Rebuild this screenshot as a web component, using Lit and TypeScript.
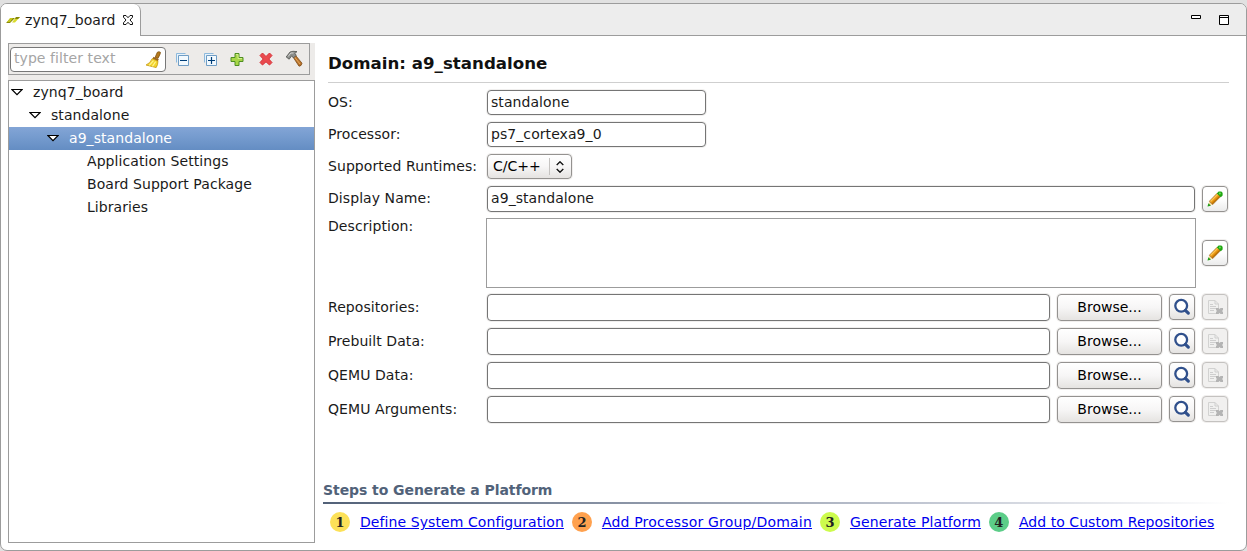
import { LitElement, html, css, svg } from "lit";
import { customElement, property } from "lit/decorators.js";

const glyphs: Record<string, [string, unknown]> = {
  xilinx: ["0 0 16 16", svg`<path d="M1 11L6 6H10L5 11Z" fill="#8a8a08"/><path d="M2 10H5L8 6H5Z" fill="#c4c61c"/><path d="M7 10.5L11 5H15L10 10.5Z" fill="#d9db2c"/><path d="M11 5H15L13 7H10Z" fill="#85850a"/>`],
  close: ["0 0 12 12", svg`<path d="M1.5 1.5H4L6 3.7L8 1.5H10.5V3.2L8 6L10.5 8.8V10.5H8L6 8.3L4 10.5H1.5V8.8L4 6L1.5 3.2Z" fill="#fff" stroke="#111"/>`],
  broom: ["0 0 16 16", svg`<path d="M9.5 6L11.6 1.2Q13.2 0 14.6 1.3Q14.6 2.5 12.2 7Z" fill="#b57a1c" stroke="#7c4d0c" stroke-width=".7"/><path d="M8 5.5L13 7.7L12 9.6L7 7.5Z" fill="#9c641c"/><path d="M6.8 7.2L12.2 9.6Q12.2 13 10.5 15.6L1 13.2Q5 11.5 6.8 7.2Z" fill="#f2d42c" stroke="#c79b10" stroke-width=".8"/><path d="M4 13.5L8 9M7 14.5L10 10" stroke="#fff494" stroke-width="1"/>`],
  collapse: ["0 0 16 16", svg`<path d="M2.5 11.5V2.5H11.5" fill="#e8f3fb" stroke="#8db9dc"/><path d="M4.5 4.5H14.5V14.5H4.5Z" fill="#f2f9fe" stroke="#6f9dc5"/><path d="M6 9H13V10H6Z" fill="#003e78"/>`],
  expand: ["0 0 16 16", svg`<path d="M2.5 11.5V2.5H11.5" fill="#e8f3fb" stroke="#8db9dc"/><path d="M4.5 4.5H14.5V14.5H4.5Z" fill="#f2f9fe" stroke="#6f9dc5"/><path d="M6 9.5H13M9.5 6V13" stroke="#003e78" stroke-width="1.2"/>`],
  plus: ["0 0 16 16", svg`<path d="M6 2.5H10V6.5H14V10.5H10V14.5H6V10.5H2V6.5H6Z" fill="#a8d648" stroke="#4f8e22"/><path d="M7 3.5H9V7.5H13" fill="none" stroke="#d2ee8e"/>`],
  cross: ["0 0 16 16", svg`<path d="M4.5 2L8 5.5L11.5 2L14 4.5L10.8 8L14 11.5L11.5 14L8 10.8L4.5 14L2 11.5L5.2 8L2 4.5Z" fill="#ea4a4e" stroke="#d63238"/>`],
  hammer: ["0 0 18 18", svg`<path d="M8 7L10.2 5L17 13.2Q16.5 16.2 14 16.2Z" fill="#b9742c" stroke="#7c4a18" stroke-width=".8"/><path d="M9.5 7L15 14" stroke="#e3a75e"/><path d="M1.2 7L5 2Q7.5.8 12 1.6L9.8 3.5L11.3 5.2L8.6 8L6.7 5.8L4.2 9.2Z" fill="#8d8f8c" stroke="#50524e" stroke-width=".8"/><path d="M3.2 6.5L5.8 3H8.5" fill="none" stroke="#d5d6d4"/>`],
  arrow: ["0 0 12 8", svg`<path d="M.9 1.5H11.1L6 6.6Z" fill="#fff" stroke="#000" stroke-width="1.2"/>`],
  updown: ["0 0 8 12", svg`<path d="M.7 4L4 .8L7.3 4M.7 8L4 11.2L7.3 8" fill="none" stroke="#111" stroke-width="1.4"/>`],
  pencil: ["0 0 16 16", svg`<path d="M1 15L2.4 10.2L5.5 13.5Z" fill="#f7d79b"/><path d="M2.4 10.2L10.2 2.2L13.6 5.6L5.7 13.6Z" fill="#e9960f" stroke="#87530b" stroke-width=".6"/><path d="M3.5 10.5L11 3" stroke="#fbc557" stroke-width="1.2"/><path d="M5 12.7L12.8 5" stroke="#a96206"/><path d="M9.8 2.4L11.6 .6H14.3L15.6 1.8V4.4L13.8 6.2Z" fill="#20a713"/><circle cx="12.9" cy="2.5" r="1" fill="#6fdd58"/><path d="M.5 15.5L1.4 12.2L4 14.8Z" fill="#1f9d17"/>`],
  search: ["0 0 18 18", svg`<circle cx="8.2" cy="7.8" r="5.9" fill="#fff" stroke="#30508c" stroke-width="2.3"/><path d="M12.4 12.4L15.3 15.1" stroke="#30508c" stroke-width="3.2" stroke-linecap="round"/>`],
  remove: ["0 0 16 16", svg`<path d="M1.5 1.5H8L11.5 5V14.5H1.5Z" fill="#f0f0ef" stroke="#d2d2d1"/><path d="M8 1.5V5H11.5M3 5.5H6M3 7.5H9M3 9.5H9M3 11.5H7" fill="none" stroke="#cecece"/><path d="M9 9H11.5L12.5 10L13.5 9H16V11L15 12L16 13V15H13.5L12.5 14L11.5 15H9V13L10 12L9 11Z" fill="#b4b4b4"/>`],
  minimize: ["0 0 10 10", svg`<path d="M.5.5H9.5V3.5H.5Z" fill="#fff" stroke="#000"/>`],
  maximize: ["0 0 10 10", svg`<path d="M.5.5H9.5V9.5H.5ZM.5 2.5H9.5" fill="#fff" stroke="#000"/>`],
};

@customElement("ui-icon")
class UiIcon extends LitElement {
  @property() name = "";
  static styles = css`
    :host { display: block; flex: none; width: 16px; height: 16px; }
    svg { display: block; width: 100%; height: 100%; }
  `;
  render() {
    const [box, body] = glyphs[this.name] ?? ["0 0 1 1", ""];
    return html`<svg viewBox=${box}>${body}</svg>`;
  }
}

@customElement("app-root")
class AppRoot extends LitElement {
  static styles = css`
    :host { display: block; height: 551px; box-sizing: border-box; padding-top: 3px; background: #e1e1e1;
      font: 14px/16px "DejaVu Sans", sans-serif; letter-spacing: .07px; color: #1a1a1a; overflow: hidden; white-space: nowrap; }
    * { box-sizing: border-box; }
    .frame { height: 548px; border: 1px solid #9c9c9c; border-radius: 7px; background: #fff; overflow: hidden;
      display: flex; flex-direction: column; }
    .tabs { height: 32px; flex: none; display: flex; background: #ededed; border-bottom: 1px solid #9c9c9c; }
    .tab { width: 140px; height: 32px; background: #fff; border-right: 1px solid #9c9c9c; border-top-right-radius: 7px;
      display: flex; align-items: center; padding-left: 4px; }
    .tab span { margin-left: 4px; width: 97px; }
    .tab .x { width: 12px; height: 12px; }
    .window { margin-left: auto; display: flex; gap: 18px; padding: 11px 17px 0 0; }
    .window ui-icon { width: 10px; height: 10px; }
    .body { flex: 1; min-height: 0; display: flex; padding: 7px 17px 7px 7px; }
    .side { width: 307px; flex: none; display: flex; flex-direction: column; background: #edebe9; height: 500px; }
    .toolbar { width: 302px; height: 32px; border: 1px solid #9c9c9c; display: flex; align-items: center; padding-left: 1px; margin-bottom: 5px; }
    .filter { width: 156px; height: 25px; border: 1px solid #777; border-radius: 4px; background: #fff; color: #a5a5a5;
      display: flex; align-items: center; justify-content: space-between; padding: 0 2px 0 3px; margin-right: 8px; letter-spacing: .07px; }
    .filter span { padding-bottom: 2px; }
    .filter ui-icon { width: 17px; height: 17px; margin-right: 1px; }
    .tools { display: flex; gap: 12px; align-items: center; }
    .tools .s2 { margin-left: -1px; }
    .tools .s3 { margin-left: 1px; }
    .tools .big { width: 18px; height: 18px; margin-left: -1px; }
    .tree { flex: 1; border: 1px solid #9c9c9c; background: #fff; }
    .node { height: 23px; display: flex; align-items: center; padding-bottom: 2px; }
    .node ui-icon { width: 12px; height: 8px; margin-right: 10.4px; }
    .node.d0 { padding-left: 1.6px; }
    .node.d1 { padding-left: 19.6px; }
    .node.d2 { padding-left: 37.6px; color: #fff; background: linear-gradient(#83a5d6, #759bce 45%, #648dc3); }
    .node.d3 { padding-left: 78px; }
    .main { flex: 1; min-width: 0; padding-left: 8px; }
    h1 { margin: 0 0 0 5px; height: 40px; padding-top: 12px; border-bottom: 1px solid #cfcfcf; font-size: 16.65px; line-height: 18px; font-weight: bold; letter-spacing: 0; color: #111; }
    .form { margin: 0 1px 0 5px; padding-top: 7px; }
    .row { display: flex; align-items: center; height: 25px; margin-bottom: 7px; }
    .row label { width: 159px; flex: none; padding-bottom: 2px; }
    .row.name { height: 26px; margin-bottom: 6px; }
    .row.desc { height: 70px; margin-bottom: 6px; }
    .desc label { align-self: flex-start; }
    .row.path { height: 27px; align-items: flex-start; margin-bottom: 7px; }
    .path label { padding-top: 5px; }
    .input { flex: 1; height: 100%; border: 1px solid #757575; border-radius: 4px; background: #fff; box-shadow: 0 0 0 1px #f0efee; padding: 0 3px 2px; display: flex; align-items: center; }
    .input.short { flex: none; width: 219px; }
    .area { flex: 1; height: 70px; border: 1px solid #9c9c9c; margin: 0 -1px; }
    .btn { height: 26px; border: 1px solid #949290; border-radius: 4px; background: linear-gradient(#fff, #f7f6f6 50%, #e5e3e1);
      box-shadow: 0 0 0 1px #f1efee; display: flex; align-items: center; justify-content: center; color: #000; margin-left: 7px; flex: none; letter-spacing: 0; }
    .icon { width: 26px; }
    .icon ui-icon { width: 18px; height: 18px; }
    .icon.edit { background: linear-gradient(#fff, #fff 50%, #ebebeb); }
    .icon.edit ui-icon { width: 16px; height: 16px; }
    .icon.off { background: #f1f0ef; border-color: #c4c2c0; }
    .icon.off ui-icon { width: 16px; height: 16px; }
    .browse { width: 105px; height: 27px; padding-bottom: 2px; }
    .select { width: 85px; height: 25px; margin: 0; justify-content: flex-start; padding-left: 5px; }
    .select span { padding-bottom: 2px; }
    .select i { width: 1px; height: 17px; background: #c5c3c1; margin-left: auto; }
    .select ui-icon { width: 8px; height: 12px; margin: 0 7px 0 6px; }
    h2 { margin: 58px 0 0; height: 21px; font-size: 14px; line-height: 18px; font-weight: bold; letter-spacing: -.07px; color: #516279; }
    .rule { height: 2px; background: linear-gradient(90deg, #526178, #c1c6d2 66%, #fff); }
    .steps { display: flex; align-items: center; padding: 8px 0 0 7px; height: 28px; }
    .step { display: flex; align-items: center; margin-right: 8px; }
    .dot { width: 20px; height: 20px; border-radius: 50%; margin-right: 10px; text-align: center; font: bold 13px/21px "DejaVu Serif", serif; letter-spacing: 0; color: #222; }
    .n1 { background: #fce158; } .n2 { background: #ffa14e; } .n3 { background: #cdfb4d; } .n4 { background: #5ccd88; }
    a { color: #0000ee; text-decoration: underline; }
    .l1 { letter-spacing: .08px; } .l2 { letter-spacing: .19px; } .l3 { letter-spacing: .12px; } .l4 { letter-spacing: .05px; }
  `;

  render() {
    const tools = ["collapse", "expand", "plus", "cross"];
    const nodes: [number, string][] = [[0, "zynq7_board"], [1, "standalone"], [2, "a9_standalone"], [3, "Application Settings"], [3, "Board Support Package"], [3, "Libraries"]];
    const paths = ["Repositories:", "Prebuilt Data:", "QEMU Data:", "QEMU Arguments:"];
    const steps = ["Define System Configuration", "Add Processor Group/Domain", "Generate Platform", "Add to Custom Repositories"];
    return html`<div class="frame">
      <div class="tabs">
        <div class="tab"><ui-icon name="xilinx"></ui-icon><span>zynq7_board</span><ui-icon class="x" name="close"></ui-icon></div>
        <div class="window"><ui-icon name="minimize"></ui-icon><ui-icon name="maximize"></ui-icon></div>
      </div>
      <div class="body">
        <div class="side">
          <div class="toolbar">
            <div class="filter"><span>type filter text</span><ui-icon name="broom"></ui-icon></div>
            <div class="tools">${tools.map((n, i) => html`<ui-icon class="s${i}" name=${n}></ui-icon>`)}<ui-icon class="big" name="hammer"></ui-icon></div>
          </div>
          <div class="tree">${nodes.map(([d, t]) => html`<div class="node d${d}">${d < 3 ? html`<ui-icon name="arrow"></ui-icon>` : ""}<span>${t}</span></div>`)}</div>
        </div>
        <div class="main">
          <h1>Domain: a9_standalone</h1>
          <div class="form">
            <div class="row"><label>OS:</label><div class="input short">standalone</div></div>
            <div class="row"><label>Processor:</label><div class="input short">ps7_cortexa9_0</div></div>
            <div class="row"><label>Supported Runtimes:</label><div class="btn select"><span>C/C++</span><i></i><ui-icon name="updown"></ui-icon></div></div>
            <div class="row name"><label>Display Name:</label><div class="input">a9_standalone</div><div class="btn icon edit"><ui-icon name="pencil"></ui-icon></div></div>
            <div class="row desc"><label>Description:</label><div class="area"></div><div class="btn icon edit"><ui-icon name="pencil"></ui-icon></div></div>
            ${paths.map((p) => html`<div class="row path"><label>${p}</label><div class="input"></div><div class="btn browse">Browse...</div><div class="btn icon"><ui-icon name="search"></ui-icon></div><div class="btn icon off"><ui-icon name="remove"></ui-icon></div></div>`)}
          </div>
          <h2>Steps to Generate a Platform</h2>
          <div class="rule"></div>
          <div class="steps">${steps.map((s, i) => html`<div class="step"><span class="dot n${i + 1}">${i + 1}</span><a class="l${i + 1}">${s}</a></div>`)}</div>
        </div>
      </div>
    </div>`;
  }
}
